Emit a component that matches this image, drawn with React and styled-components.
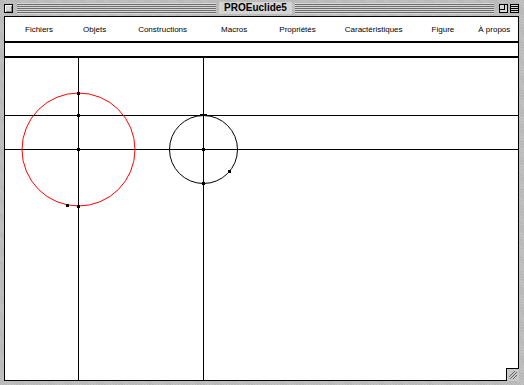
import React from 'react'
import styled, { createGlobalStyle } from 'styled-components'

const GlobalStyle = createGlobalStyle`
    html, body {
        margin: 0;
        padding: 0;
        overflow: hidden;
    }
    body {
        font-family: "Liberation Sans", Arial, sans-serif;
    }
`

// space before each menu title, as in the original menu
const menuItems = [
    { label: 'Fichiers', gap: 20 },
    { label: 'Objets', gap: 30 },
    { label: 'Constructions', gap: 32 },
    { label: 'Macros', gap: 34 },
    { label: 'Propriétés', gap: 32 },
    { label: 'Caractéristiques', gap: 29 },
    { label: 'Figure', gap: 29 },
    { label: 'À propos', gap: 24 },
]

export default function App() {
    return (
        <>
            <GlobalStyle />
            <Window>
                <TitleBar>
                    <CloseBox />
                    <Stripes />
                    <Title>PROEuclide5</Title>
                    <Stripes />
                    <ZoomBox>
                        <span />
                    </ZoomBox>
                    <CollapseBox />
                </TitleBar>

                <Content>
                    <MenuBar>
                        {menuItems.map((item) => (
                            <MenuItem key={item.label} $gap={item.gap}>
                                {item.label}
                            </MenuItem>
                        ))}
                    </MenuBar>
                    <ToolStrip />
                    <Canvas>
                        <svg width="513" height="322" viewBox="0 0 513 322">
                            <g stroke="#000" strokeWidth="1" fill="none" shapeRendering="crispEdges">
                                <line x1="73.5" y1="0" x2="73.5" y2="322" />
                                <line x1="198.5" y1="0" x2="198.5" y2="322" />
                                <line x1="0" y1="57.5" x2="513" y2="57.5" />
                                <line x1="0" y1="91.5" x2="513" y2="91.5" />
                            </g>
                            <circle cx="73.5" cy="91.5" r="56.5" stroke="#ff0000" strokeWidth="1" fill="none" />
                            <circle cx="198.5" cy="91.5" r="34" stroke="#000" strokeWidth="1" fill="none" />
                            <g fill="#000" shapeRendering="crispEdges">
                                <rect x="72" y="34" width="3" height="3" />
                                <rect x="72" y="56" width="3" height="3" />
                                <rect x="72" y="90" width="3" height="3" />
                                <rect x="72" y="147" width="3" height="3" />
                                <rect x="61" y="146" width="3" height="3" />
                                <rect x="195" y="56" width="7" height="2" />
                                <rect x="197" y="90" width="3" height="3" />
                                <rect x="197" y="124" width="3" height="3" />
                                <rect x="223" y="112" width="3" height="3" />
                            </g>
                        </svg>
                    </Canvas>
                    <GrowBox>
                        <svg width="12" height="12" viewBox="0 0 12 12">
                            <g stroke="#666" strokeWidth="1" shapeRendering="crispEdges">
                                <line x1="3" y1="10" x2="10" y2="3" />
                                <line x1="6" y1="10" x2="10" y2="6" />
                                <line x1="2" y1="8" x2="8" y2="2" />
                            </g>
                        </svg>
                    </GrowBox>
                </Content>
            </Window>
        </>
    )
}

const Window = styled.div`
    width: 524px;
    height: 385px;
    box-sizing: border-box;
    display: flex;
    flex-direction: column;
    background-color: #c2c2c2;
    background-image: repeating-linear-gradient(45deg, #b6b6b6 0 1px, transparent 1px 2px);
    padding: 0 5px 4px 4px;
`

const TitleBar = styled.div`
    height: 16px;
    display: flex;
    align-items: center;
    gap: 3px;
`

const CloseBox = styled.div`
    width: 9px;
    height: 9px;
    box-sizing: border-box;
    border: 1px solid #000;
    background: #d8d8d8;
    box-shadow: inset 1px 1px 0 #fff, inset -1px -1px 0 #888;
    margin-right: 1px;
`

const Stripes = styled.div`
    flex: 1;
    height: 11px;
    background: repeating-linear-gradient(
        to bottom,
        #d6d6d6 0 1px,
        #6e6e6e 1px 2px
    );
`

const Title = styled.div`
    font-family: "Liberation Sans", Arial, sans-serif;
    font-weight: bold;
    font-size: 10px;
    line-height: 12px;
    color: #000;
    padding: 0 5px;
    background: #d4d4d4;
`

const TitleBox = styled.div`
    width: 9px;
    height: 9px;
    box-sizing: border-box;
    border: 1px solid #000;
    background: #d8d8d8;
    position: relative;
`

const ZoomBox = styled(TitleBox)`
    margin-left: 2px;

    span {
        position: absolute;
        left: 0;
        top: 0;
        width: 4px;
        height: 4px;
        border-right: 1px solid #000;
        border-bottom: 1px solid #000;
    }
`

const CollapseBox = styled(TitleBox)`
    margin-left: -1px;
    background: repeating-linear-gradient(to bottom, #d8d8d8 0 1px, #000 1px 2px);
`

const Content = styled.div`
    flex: 1;
    position: relative;
    display: flex;
    flex-direction: column;
    background: #fff;
    border: 1px solid #000;
`

const MenuBar = styled.div`
    height: 24px;
    display: flex;
    align-items: center;
    border-bottom: 2px solid #000;
`

const MenuItem = styled.span`
    margin-left: ${(props) => props.$gap}px;
    font-family: "Liberation Sans", Arial, sans-serif;
    font-size: 8px;
    color: #000;
    white-space: nowrap;
    cursor: default;
`

const ToolStrip = styled.div`
    height: 13px;
    border-bottom: 2px solid #000;
`

const Canvas = styled.div`
    flex: 1;
    overflow: hidden;

    svg {
        display: block;
    }
`

const GrowBox = styled.div`
    position: absolute;
    right: -1px;
    bottom: -1px;
    width: 13px;
    height: 13px;
    box-sizing: border-box;
    border-left: 1px solid #000;
    border-top: 1px solid #000;
    background: #c8c8c8;
    display: flex;
    align-items: center;
    justify-content: center;
`
